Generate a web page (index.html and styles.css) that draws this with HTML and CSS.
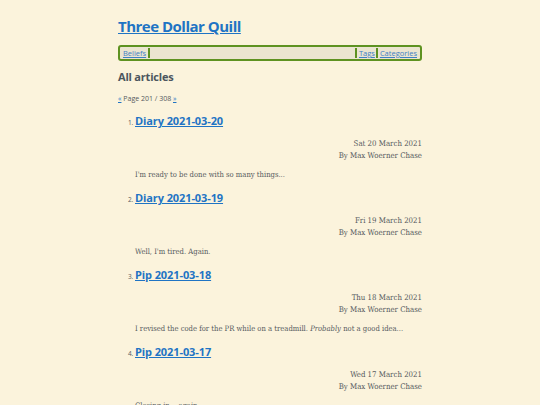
FILE: index.html
```html
<!DOCTYPE html>
<html lang="en">
<head>
<meta charset="utf-8">
<title>Three Dollar Quill</title>
<link rel="stylesheet" href="styles.css">
</head>
<body>
<div class="page">
  <header class="site-header">
    <h1 class="site-title"><a href="#">Three Dollar Quill</a></h1>
    <nav class="nav">
      <a class="nav-link nav-first" href="#">Beliefs</a>
      <span class="nav-fill"></span>
      <a class="nav-link nav-sep" href="#">Tags</a>
      <a class="nav-link nav-sep" href="#">Categories</a>
    </nav>
  </header>
  <main>
    <h2 class="section-title">All articles</h2>
    <p class="pager"><a href="#">«</a> Page 201 / 308 <a href="#">»</a></p>
    <ol class="articles" start="1">
      <li class="article">
        <h3 class="article-title"><a href="#">Diary 2021-03-20</a></h3>
        <div class="meta">
          <div>Sat 20 March 2021</div>
          <div>By Max Woerner Chase</div>
        </div>
        <p class="excerpt">I'm ready to be done with so many things...</p>
      </li>
      <li class="article">
        <h3 class="article-title"><a href="#">Diary 2021-03-19</a></h3>
        <div class="meta">
          <div>Fri 19 March 2021</div>
          <div>By Max Woerner Chase</div>
        </div>
        <p class="excerpt">Well, I'm tired. Again.</p>
      </li>
      <li class="article">
        <h3 class="article-title"><a href="#">Pip 2021-03-18</a></h3>
        <div class="meta">
          <div>Thu 18 March 2021</div>
          <div>By Max Woerner Chase</div>
        </div>
        <p class="excerpt">I revised the code for the PR while on a treadmill. <em>Probably</em> not a good idea...</p>
      </li>
      <li class="article">
        <h3 class="article-title"><a href="#">Pip 2021-03-17</a></h3>
        <div class="meta">
          <div>Wed 17 March 2021</div>
          <div>By Max Woerner Chase</div>
        </div>
        <p class="excerpt">Closing in... again.</p>
      </li>
    </ol>
  </main>
</div>
</body>
</html>
```

FILE: styles.css
```css
html, body {
  margin: 0;
  padding: 0;
  background: #fbf3dc;
}
body {
  font-family: "DejaVu Serif", "Liberation Serif", serif;
  color: #555a5e;
  font-size: 7.5px;
}
.page {
  width: 304px;
  margin: 0 auto;
  padding-top: 14px;
}
a {
  color: #1f74c4;
}
.site-title {
  margin: 0;
  font-family: "Open Sans", "Noto Sans", sans-serif;
  font-size: 15px;
  font-weight: 700;
  line-height: 24px;
  letter-spacing: -0.5px;
}
.site-title a {
  color: #1f74c4;
}
.nav {
  margin-top: 7px;
  display: flex;
  align-items: center;
  height: 10px;
  padding: 1px 2px;
  border: 2px solid #5e9221;
  border-radius: 3px;
  background: #ebe5d0;
  font-family: "Open Sans", "Noto Sans", sans-serif;
  font-size: 7.5px;
}
.nav-link {
  color: #3f80c4;
  line-height: 10px;
  padding: 0 1px;
}
.nav-first {
  border-right: 2px solid #5e9221;
  padding-right: 2px;
}
.nav-fill {
  flex: 1;
}
.nav-sep {
  border-left: 2px solid #5e9221;
  padding-left: 2px;
}
.section-title {
  margin: 8px 0 0;
  font-family: "Open Sans", "Noto Sans", sans-serif;
  font-size: 11px;
  font-weight: 700;
  line-height: 16px;
  letter-spacing: -0.2px;
  color: #4c565e;
}
.pager {
  margin: 9px 0 0;
  font-family: "Open Sans", "Noto Sans", sans-serif;
  font-size: 7px;
  line-height: 10px;
}
.pager a {
  color: #1f74c4;
}
.articles {
  margin: 6px 0 0;
  padding-left: 17px;
}
.article {
  font-family: "Open Sans", "Noto Sans", sans-serif;
  font-size: 6.5px;
  margin-bottom: 6px;
}
.article-title {
  margin: 0;
  font-size: 11px;
  font-weight: 700;
  line-height: 22px;
  letter-spacing: -0.1px;
}
.article-title a {
  color: #1f74c4;
}
.meta {
  margin-top: 6px;
  text-align: right;
  font-family: "DejaVu Serif", "Liberation Serif", serif;
  font-stretch: condensed;
  font-size: 7.8px;
  line-height: 12px;
}
.excerpt {
  margin: 7px 0 0;
  font-family: "DejaVu Serif", "Liberation Serif", serif;
  font-stretch: condensed;
  font-size: 7.6px;
  line-height: 12px;
}
```
